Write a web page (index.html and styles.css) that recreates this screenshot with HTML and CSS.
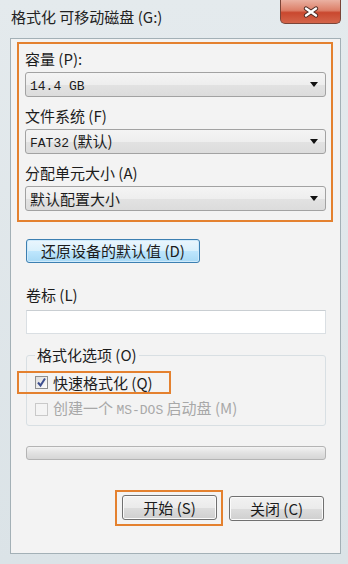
FILE: index.html
```html
<!DOCTYPE html>
<html lang="zh-CN">
<head>
<meta charset="UTF-8" />
<meta name="viewport" content="width=device-width, initial-scale=1" />
<title>格式化 可移动磁盘 (G:)</title>
<link rel="stylesheet" href="styles.css">
</head>
<body>

<div class="window">
  <div class="titlebar">
    <span class="title">格式化 可移动磁盘 (G:)</span>
    <button class="close-btn" aria-label="关闭">
      <svg width="16" height="12" viewBox="0 0 16 12">
        <path d="M3 2.5 L13 9.5 M13 2.5 L3 9.5" stroke="#4a2a24" stroke-width="4.2" stroke-linecap="round" fill="none" />
        <path d="M3 2.5 L13 9.5 M13 2.5 L3 9.5" stroke="#ffffff" stroke-width="2.4" stroke-linecap="round" fill="none" />
      </svg>
    </button>
  </div>

  <div class="client">
    <div class="mark mark-main">
      <div class="field-label first">容量 (P):</div>
      <div class="combo"><span><span class="mono">14.4 GB</span></span><span class="arrow"></span></div>

      <div class="field-label">文件系统 (F)</div>
      <div class="combo"><span><span class="mono">FAT32</span> (默认)</span><span class="arrow"></span></div>

      <div class="field-label">分配单元大小 (A)</div>
      <div class="combo"><span>默认配置大小</span><span class="arrow"></span></div>
    </div>

    <div class="lower">
      <button class="btn btn-restore">还原设备的默认值 (D)</button>

      <div class="field-label volume-label">卷标 (L)</div>
      <div class="textbox"></div>

      <fieldset class="options">
        <legend>格式化选项 (O)</legend>
        <div class="check-row mark mark-check">
          <span class="checkbox">
            <svg width="11" height="11" viewBox="0 0 11 11">
              <path d="M2 5.5 L4.5 8.5 L9 1.5" stroke="#3d4f8f" stroke-width="2" fill="none" />
            </svg>
          </span>
          <span>快速格式化 (Q)</span>
        </div>
        <div class="check-row disabled">
          <span class="checkbox"></span>
          <span>创建一个 <span class="mono">MS-DOS</span> 启动盘 (M)</span>
        </div>
      </fieldset>

      <div class="progress"></div>

      <div class="actions">
        <div class="mark mark-start">
          <button class="btn btn-action">开始 (S)</button>
        </div>
        <button class="btn btn-action">关闭 (C)</button>
      </div>
    </div>
  </div>
</div>

</body>
</html>
```

FILE: styles.css
```css
body {
  margin: 0;
  font-family: "Noto Sans CJK SC", "Liberation Sans", sans-serif;
  color: #1c1c1c;
}
.window {
  width: 348px;
  height: 564px;
  background: linear-gradient(#e4eaed, #dbe3e7);
  box-sizing: border-box;
  overflow: hidden;
}
.titlebar {
  height: 38px;
  display: flex;
  align-items: flex-start;
}
.title {
  padding: 7px 0 0 11px;
  font-size: 15px;
  line-height: 20px;
  color: #222;
}
.close-btn {
  margin-left: auto;
  margin-right: 7px;
  width: 61px;
  height: 24px;
  padding: 0;
  border: 1px solid #7a4538;
  border-top: none;
  border-radius: 0 0 5px 5px;
  background: linear-gradient(#eab1a2, #dc7f68 45%, #c9482f 55%, #d4654a);
  display: flex;
  align-items: center;
  justify-content: center;
}
.client {
  margin: 0 7px 0 10px;
  height: 516px;
  box-sizing: border-box;
  border: 1px solid #a3b0b6;
  background: #f3f3f3;
  padding-top: 3px;
}
.mark {
  border: 2px solid #e4812f;
}
.mark-main {
  margin: 0 7px 0 6px;
  padding: 0 5px 9px 6px;
}
.field-label {
  font-size: 15px;
  line-height: 20px;
  margin: 9px 0 3px;
}
.field-label.first {
  margin-top: 5px;
}
.combo {
  height: 25px;
  box-sizing: border-box;
  border: 1px solid #a2a2a2;
  border-radius: 3px;
  background: linear-gradient(#f4f4f4, #eeeeee 50%, #e2e2e2 51%, #dcdcdc);
  font-size: 15px;
  line-height: 23px;
  padding-left: 4px;
  display: flex;
  align-items: center;
}
.mono {
  font-family: "Liberation Mono", monospace;
  font-size: 13px;
}
.arrow {
  margin-left: auto;
  margin-right: 7px;
  width: 0;
  height: 0;
  border-left: 4px solid transparent;
  border-right: 4px solid transparent;
  border-top: 5px solid #111;
}
.lower {
  padding: 0 14px 0 15px;
}
.btn {
  font-family: "Noto Sans CJK SC", "Liberation Sans", sans-serif;
  font-size: 15px;
  color: #1c1c1c;
  padding: 0;
  cursor: pointer;
  box-sizing: border-box;
  border-radius: 3px;
}
.btn-restore {
  display: block;
  margin-top: 17px;
  width: 174px;
  height: 24px;
  border: 1px solid #3c7fb1;
  background: linear-gradient(#eaf6fd, #d9f0fc 50%, #bee6fd 51%, #a7d9f5);
  box-shadow: inset 0 0 0 1px #cfeafb;
  line-height: 20px;
}
.volume-label {
  margin: 22px 0 5px;
}
.textbox {
  height: 24px;
  box-sizing: border-box;
  background: #fff;
  border: 1px solid #dadfe3;
  border-top-color: #c9ced2;
}
.options {
  margin: 11px 0 0;
  padding: 0 0 4px 8px;
  min-width: 0;
  border: 1px solid #d8dfe3;
  border-radius: 3px;
}
.options legend {
  margin-left: 0;
  padding: 0 2px;
  font-size: 15px;
  line-height: 20px;
}
.check-row {
  display: flex;
  align-items: center;
  font-size: 15px;
  line-height: 20px;
  margin-top: 4px;
}
.mark-check {
  margin: 6px 0 0 -18px;
  width: 154px;
  box-sizing: border-box;
  padding-left: 16px;
  line-height: 19px;
}
.checkbox {
  flex: none;
  width: 13px;
  height: 13px;
  box-sizing: border-box;
  border: 1px solid #8e8f8f;
  background: linear-gradient(135deg, #dcdcdc, #fdfdfd);
  margin-right: 5px;
  display: flex;
  align-items: center;
  justify-content: center;
}
.check-row.disabled {
  color: #a8a8a8;
}
.check-row.disabled .checkbox {
  border-color: #c9c9c9;
  background: #f4f4f4;
}
.progress {
  margin-top: 20px;
  height: 14px;
  box-sizing: border-box;
  border: 1px solid #b4b4b4;
  border-radius: 3px;
  background: linear-gradient(#f3f3f3, #e2e2e2 50%, #d6d6d6);
}
.actions {
  display: flex;
  align-items: center;
  margin-top: 30px;
  padding-left: 89px;
  gap: 6px;
}
.mark-start {
  padding: 3px 4px 4px 5px;
}
.btn-action {
  display: block;
  width: 95px;
  height: 25px;
  border: 1px solid #707070;
  background: linear-gradient(#f2f2f2, #ebebeb 50%, #dddddd 51%, #cfcfcf);
  box-shadow: inset 0 0 0 1px #fbfbfb;
  line-height: 21px;
}
```
